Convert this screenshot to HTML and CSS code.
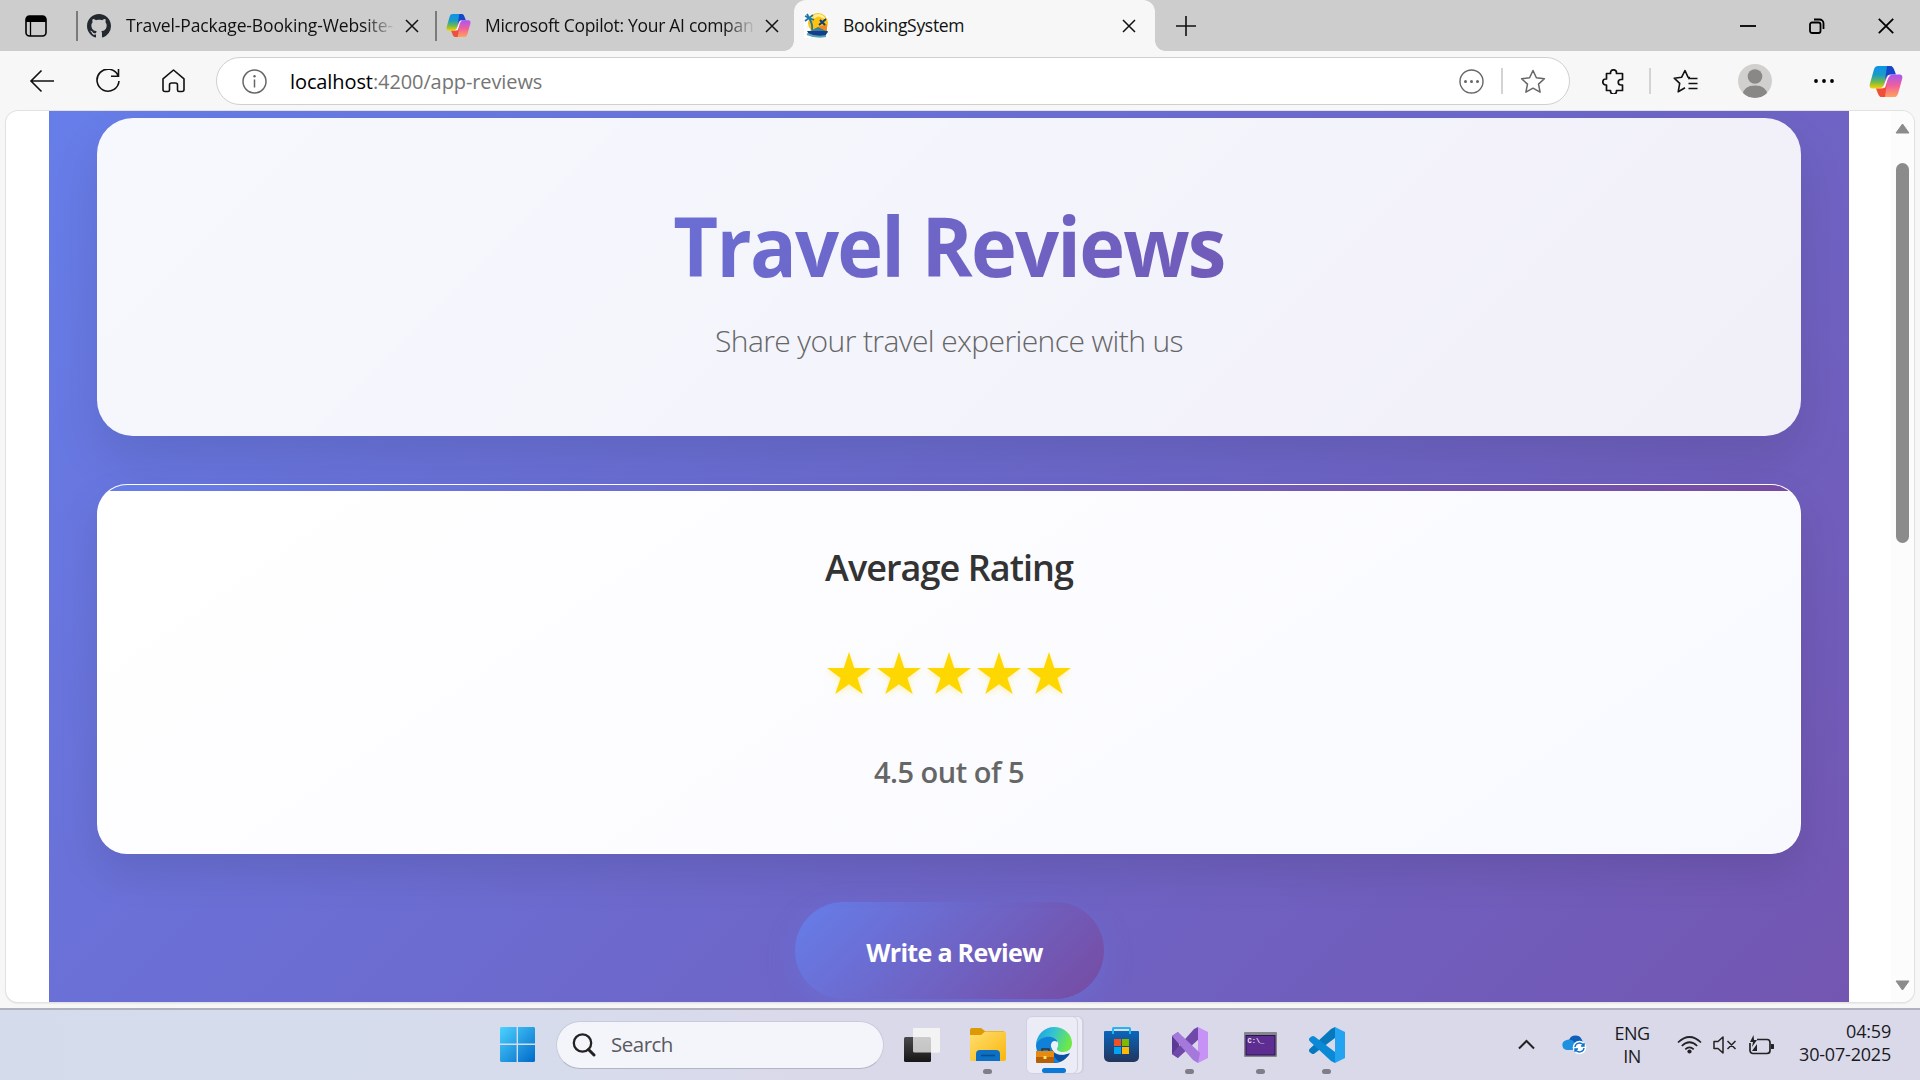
FILE: index.html
```html
<!DOCTYPE html>
<html lang="en">
<head>
<meta charset="utf-8">
<title>BookingSystem</title>
<link rel="stylesheet" href="styles.css">
</head>
<body>
<svg class="defs" width="0" height="0" aria-hidden="true">
  <defs>
    <linearGradient id="cp1" x1="0" y1="0" x2="0" y2="1"><stop offset="0" stop-color="#0a94e8"/><stop offset=".4" stop-color="#1c9bc8"/><stop offset=".7" stop-color="#6dbb4a"/><stop offset="1" stop-color="#ffd000"/></linearGradient>
    <linearGradient id="cp2" x1="0" y1="0" x2="0" y2="1"><stop offset="0" stop-color="#a855f7"/><stop offset=".5" stop-color="#f0609a"/><stop offset="1" stop-color="#ffa25c"/></linearGradient>
    <linearGradient id="win" x1="0" y1="0" x2="1" y2="1"><stop offset="0" stop-color="#4cd2ff"/><stop offset="1" stop-color="#0069c8"/></linearGradient>
    <linearGradient id="fold" x1="0" y1="0" x2="1" y2="1"><stop offset="0" stop-color="#ffdf70"/><stop offset="1" stop-color="#f9b60c"/></linearGradient>
    <linearGradient id="edge" x1="0" y1="0" x2="1" y2=".3"><stop offset="0" stop-color="#1a9ae0"/><stop offset=".5" stop-color="#33c3d4"/><stop offset="1" stop-color="#6be84a"/></linearGradient>
    <linearGradient id="store" x1="0" y1="0" x2="0" y2="1"><stop offset="0" stop-color="#0a66bd"/><stop offset="1" stop-color="#22355c"/></linearGradient>
    <linearGradient id="tv" x1="0" y1="0" x2="0" y2="1"><stop offset="0" stop-color="#4a4a4a"/><stop offset="1" stop-color="#161616"/></linearGradient>
    <symbol id="copilot" viewBox="0 0 34 37" preserveAspectRatio="none">
      <path fill="url(#cp1)" d="M9 0h14l-6 23c-1 3-3 4-6 4H4c-3 0-4-2-3-6L5 4c1-3 2-4 4-4z"/>
      <path fill="#1747c8" d="M18 0h3c2 0 3 1 4 4l2 6h-5c-3 0-4 1-5 4l-1 3z"/>
      <path fill="url(#cp2)" d="M25 37H11l6-23c1-3 3-4 6-4h7c3 0 4 2 3 6l-4 17c-1 3-2 4-4 4z"/>
      <path fill="#f0503a" d="M16 37h-3c-2 0-3-1-4-4l-2-6h5c3 0 4-1 5-4l1-3z"/>
      <path fill="#fff" d="M19 11h3c-2 1-3 3-4 7l-2 8h-4c2-1 3-3 4-7z"/>
    </symbol>
    <symbol id="close" viewBox="0 0 14 14"><path d="M1 1l12 12M13 1L1 13" stroke="#111" stroke-width="1.5" fill="none"/></symbol>
    <symbol id="rate-star" viewBox="0 0 44 42"><path fill="#ffd700" d="M22 0l5.200 16H44L30.400 25.900 35.700 42 22 32.200 8.300 42 13.600 25.900 0 16h16.800z"/></symbol>
  </defs>
</svg>

<div class="tabs">
  <svg class="tab-actions" width="22" height="22" viewBox="0 0 22 22"><rect x="1" y="1" width="20" height="20" rx="3.500" fill="none" stroke="#000" stroke-width="1.600"/><path d="M1 7V4.500A3.500 3.500 0 0 1 4.500 1h13A3.500 3.500 0 0 1 21 4.500V7z"/><path d="M5.500 6v15" stroke="#000" stroke-width="1.300"/></svg>
  <div class="tab">
    <svg class="fav" width="24" height="24" viewBox="0 0 16 16"><path fill="#24292f" d="M8 0C3.580 0 0 3.580 0 8c0 3.540 2.290 6.530 5.470 7.590.4.070.55-.17.55-.38 0-.19-.01-.82-.01-1.490-2.010.37-2.530-.49-2.690-.94-.09-.23-.48-.94-.82-1.130-.28-.15-.68-.52-.01-.53.63-.01 1.080.58 1.230.82.72 1.210 1.870.87 2.330.66.070-.52.28-.87.51-1.070-1.780-.2-3.640-.89-3.640-3.950 0-.87.31-1.590.82-2.150-.08-.2-.36-1.020.08-2.120 0 0 .67-.21 2.200.82.64-.18 1.320-.27 2-.27s1.360.09 2 .27c1.530-1.040 2.200-.82 2.200-.82.44 1.100.16 1.920.08 2.120.51.56.82 1.270.82 2.150 0 3.070-1.870 3.750-3.650 3.950.29.25.54.73.54 1.480 0 1.070-.01 1.930-.01 2.200 0 .21.15.46.55.38A8.010 8.010 0 0 0 16 8c0-4.420-3.580-8-8-8z"/></svg>
    <span class="tab-title fade t1">Travel-Package-Booking-Website-</span>
    <svg class="x" width="14" height="14"><use href="#close"/></svg>
  </div>
  <div class="tab">
    <svg class="fav" width="25" height="23"><use href="#copilot"/></svg>
    <span class="tab-title fade t2">Microsoft Copilot: Your AI compan</span>
    <svg class="x" width="14" height="14"><use href="#close"/></svg>
  </div>
  <div class="tab active">
    <svg class="fav" width="24" height="25" viewBox="0 0 24 25"><path fill="#fff" d="M0 3h24v22H0z"/><circle cx="14" cy="10" r="10" fill="#ffc20e"/><path d="M7 6c3-5 10-6 14 0M10 5c3-3 6-3 9 0" fill="none" stroke="#fff0a0" stroke-width="1.500"/><path d="M14 14l9-3v8H9z" fill="#f08a1d"/><path d="M5 5L1 3M5 5L3 1M5 5l4-3M5 5l5 2M5 5L1 8M5 5q4 6 3 12" stroke="#1f76a8" stroke-width="1.800" fill="none"/><path d="M15 12l7-6M16 7l5 5" stroke="#123f7c" stroke-width="2"/><path d="M4 19l10-5 10 5-3 4H6z" fill="#3e7f97"/><path d="M3 18h21l-3 5H6z" fill="#123f8c"/><path d="M3 21q9 4 19 2" stroke="#58a2b8" stroke-width="2" fill="none"/></svg>
    <span class="tab-title t3">BookingSystem</span>
    <svg class="x" width="14" height="14"><use href="#close"/></svg>
  </div>
  <svg class="plus" width="22" height="22" viewBox="0 0 22 22"><path d="M11 1v20M1 11h20" stroke="#111" stroke-width="1.600"/></svg>
  <div class="win-controls">
    <svg width="16" height="16" viewBox="0 0 16 16"><path d="M0 8h16" stroke="#000" stroke-width="1.800"/></svg>
    <svg width="16" height="16" viewBox="0 0 16 16"><rect x="1" y="4.500" width="10.500" height="10.500" rx="2" fill="none" stroke="#000" stroke-width="1.800"/><path d="M5 1.500h5.500a4 4 0 0 1 4 4V11" fill="none" stroke="#000" stroke-width="1.800"/></svg>
    <svg width="16" height="16" viewBox="0 0 16 16"><path d="M.8.8l14.400 14.400M15.200.8L.8 15.200" stroke="#000" stroke-width="1.800"/></svg>
  </div>
</div>

<div class="toolbar">
  <svg class="back" width="26" height="24" viewBox="0 0 26 24"><path d="M25 12H2M12.500 1.500L2 12l10.500 10.500" fill="none" stroke="#111" stroke-width="1.600"/></svg>
  <svg class="reload" width="24" height="24" viewBox="0 0 24 24"><path d="M22 6.500A11 11 0 1 0 23 12M22.500 0v7.200h-7.500" fill="none" stroke="#111" stroke-width="1.600"/></svg>
  <svg class="home" width="23" height="24" viewBox="0 0 23 24"><path d="M1 9.800L11.500 1 22 9.800V20.500a2 2 0 0 1-2 2h-3a1.500 1.500 0 0 1-1.500-1.500v-5a2 2 0 0 0-2-2h-4a2 2 0 0 0-2 2v5A1.500 1.500 0 0 1 6 22.500H3a2 2 0 0 1-2-2z" fill="none" stroke="#111" stroke-width="1.600" stroke-linejoin="round"/></svg>
  <div class="address">
    <svg class="info" width="25" height="25" viewBox="0 0 25 25"><circle cx="12.500" cy="12.500" r="11.500" fill="none" stroke="#666" stroke-width="1.500"/><path d="M12.500 10.500v8" stroke="#666" stroke-width="1.500"/><circle cx="12.500" cy="7.200" r="1.200" fill="#666"/></svg>
    <span class="url">localhost<span class="path">:4200/app-reviews</span></span>
    <svg class="more" width="25" height="25" viewBox="0 0 25 25"><circle cx="12.500" cy="12.500" r="11.500" fill="none" stroke="#666" stroke-width="1.400"/><g fill="#666"><circle cx="6.500" cy="12.500" r="1.500"/><circle cx="12.500" cy="12.500" r="1.500"/><circle cx="18.500" cy="12.500" r="1.500"/></g></svg>
    <i class="vline"></i>
    <svg class="star" width="26" height="25" viewBox="0 0 26 25"><path d="M13 1.500l3.400 7.200 8 1-5.900 5.400 1.600 8L13 19.200 5.900 23.100l1.600-8L1.600 9.700l8-1z" fill="none" stroke="#666" stroke-width="1.500" stroke-linejoin="round"/></svg>
  </div>
  <svg class="puzzle" width="23" height="25" viewBox="0 0 23 25"><path d="M4.500 4.500H8.500V3.800a3 3 0 1 1 6 0v.7H20.500V10.500H19a2.500 2.500 0 0 0 0 5.500h1.500V21.500H14.500v.7a3 3 0 0 1-6 0v-.7H4.500V16h-.7a3 3 0 0 1 0-6h.7z" fill="none" stroke="#111" stroke-width="1.700" stroke-linejoin="round"/></svg>
  <i class="vline v2"></i>
  <svg class="favs" width="25" height="25" viewBox="0 0 25 25"><path d="M17 8.500l-2-.3L12 1.500 8.700 8.200l-7.500 1 5.500 5.200-1.500 8.400 6.800-4M15 9.500h9.500M15.500 14.500h9M15.500 19.500h9" fill="none" stroke="#111" stroke-width="1.600" stroke-linejoin="round"/></svg>
  <svg class="avatar" width="34" height="34" viewBox="0 0 34 34"><clipPath id="av"><circle cx="17" cy="17" r="17"/></clipPath><circle cx="17" cy="17" r="17" fill="#d2d0ce"/><g fill="#8a8886" clip-path="url(#av)"><circle cx="17" cy="12.500" r="7.300"/><path d="M4.500 31q1-9.500 12.500-9.500T29.500 31q-6 3-12.500 3T4.500 31z"/></g></svg>
  <svg class="dots" width="22" height="6" viewBox="0 0 22 6"><circle cx="3" cy="3" r="1.900"/><circle cx="11" cy="3" r="1.900"/><circle cx="19" cy="3" r="1.900"/></svg>
  <svg class="cop" width="34" height="31"><use href="#copilot"/></svg>
</div>

<div class="viewport">
  <main class="reviews">
    <section class="hero">
      <h1>Travel Reviews</h1>
      <p>Share your travel experience with us</p>
    </section>
    <section class="rating">
      <h2>Average Rating</h2>
      <div class="stars">
        <svg width="44" height="42"><use href="#rate-star"/></svg>
        <svg width="44" height="42"><use href="#rate-star"/></svg>
        <svg width="44" height="42"><use href="#rate-star"/></svg>
        <svg width="44" height="42"><use href="#rate-star"/></svg>
        <svg width="44" height="42"><use href="#rate-star"/></svg>
      </div>
      <div class="score">4.5 out of 5</div>
    </section>
    <button class="write">Write a Review</button>
  </main>
  <div class="scrollbar">
    <svg width="15" height="11" viewBox="0 0 15 11"><path d="M7.500 1L14 10H1z" fill="#8b8b8b" stroke="#8b8b8b" stroke-linejoin="round"/></svg>
    <i class="thumb"></i>
    <svg width="15" height="11" viewBox="0 0 15 11"><path d="M7.500 10L14 1H1z" fill="#8b8b8b" stroke="#8b8b8b" stroke-linejoin="round"/></svg>
  </div>
</div>

<footer class="taskbar">
  <svg class="start" width="35" height="35" viewBox="0 0 35 35"><path fill="url(#win)" d="M1 0h15.600v16.600H0V1zM18 0h16l1 1v15.600H18zM0 18h16.600v17H1l-1-1zM18 18h17v16l-1 1H18z"/></svg>
  <div class="search">
    <svg width="24" height="24" viewBox="0 0 24 24"><circle cx="10.500" cy="10" r="8.700" fill="none" stroke="#222" stroke-width="2.300"/><path d="M16.500 16.500l5.500 5.500" stroke="#222" stroke-width="3" stroke-linecap="round"/></svg>
    <span>Search</span>
  </div>
  <div class="app a-tv"><svg width="36" height="34" viewBox="0 0 36 34"><rect x="0" y="9" width="27" height="25" rx="1.500" fill="url(#tv)"/><rect x="9" y="0" width="27" height="24.500" rx="1.500" fill="#fafafa" fill-opacity=".74"/><path d="M27 0h8a1 1 0 0 1 1 1v22.500a1 1 0 0 1-1 1h-8zM9 0h18v9H9z" fill="#f4f4f4" fill-opacity=".7"/></svg></div>
  <div class="app a-fold"><svg width="36" height="34" viewBox="0 0 36 34"><path fill="#dd9a05" d="M0 2a2 2 0 0 1 2-2h9l4 3h19v8H0z"/><path fill="url(#fold)" d="M0 7h11l4-3.500h19a2 2 0 0 1 2 2V31a2 2 0 0 1-2 2H2a2 2 0 0 1-2-2z"/><path fill="#0c70c4" d="M6 33v-7a4 4 0 0 1 4-4h16a4 4 0 0 1 4 4v7z"/><path d="M11 27.500h14" stroke="#0a4d8c" stroke-width="1.600"/></svg><i></i></div>
  <div class="app a-edge"><svg width="36" height="36" viewBox="0 0 36 36"><path fill="#0a4fa0" d="M16 20c0 7 8 10 18 6-3 6-9 10-16 10C9 36 3 31 1 23z"/><path fill="#1180d8" d="M0 18C1 11 7 8 13 9c6 0 9 4 8 6-3-2-6 1-5 6 0 7 4 12 8 14-8 3-24-3-24-17z"/><path fill="url(#edge)" d="M0 17C1 7 9 0 18 0c10 0 18 7 18 16 0 6-4 9-9 9-4 0-7-1-7-3 0-1 3-2 2-6C20 8 6 7 0 17z"/><path fill="#eaf0fa" d="M18 14c4 0 5 4 3 7-1 3 5 6 13 5-7 3-15 1-18-4-2-4-1-7 2-8z"/><rect x="0" y="24" width="18" height="12" rx="1" fill="#b55f08"/><path d="M0 24h18v6H0z" fill="#e68a10"/><path d="M6 24v-2h7v2" stroke="#333" fill="none" stroke-width="1.500"/><rect x="7.500" y="29" width="3" height="3" fill="#ffe060"/></svg><i class="on"></i></div>
  <div class="app a-store"><svg width="35" height="35" viewBox="0 0 35 35"><path d="M9 7V1.500a.5.500 0 0 1 .5-.5h16a.5.500 0 0 1 .5.500V7" fill="none" stroke="#24b5f0" stroke-width="2"/><path fill="url(#store)" d="M0 5a1 1 0 0 1 1-1h33a1 1 0 0 1 1 1v25a5 5 0 0 1-5 5H5a5 5 0 0 1-5-5z"/><path d="M9 4v3M26 4v3" stroke="#24b5f0" stroke-width="2"/><path fill="#f25022" d="M10 12h7v7h-7z"/><path fill="#7fba00" d="M18 12h7v7h-7z"/><path fill="#00a4ef" d="M10 20h7v7h-7z"/><path fill="#ffb900" d="M18 20h7v7h-7z"/></svg></div>
  <div class="app a-vs"><svg width="36" height="36" viewBox="0 0 36 36"><path fill="#5c3a94" d="M0 9l6-4 1 6v14l-1 6-6-4z"/><path fill="#7048aa" d="M6 31L0 27 22 2l4-2 2 11z"/><path fill="#c792f5" d="M26 0l10 5v26l-10 5z"/><path fill="#a578dc" d="M0 9l6-4 22 21-2 10-5-3z"/></svg><i></i></div>
  <div class="app a-cmd"><svg width="33" height="25" viewBox="0 0 33 25"><rect width="33" height="25" rx="1" fill="#85858c"/><rect x="1.500" y="3" width="30" height="20.500" fill="#2a1450"/><rect x="2.500" y="4" width="28" height="18.500" fill="#5d2d91"/><text x="3.500" y="10.500" font-family="Liberation Mono, monospace" font-weight="bold" font-size="7" fill="#eee">C:\_</text></svg><i></i></div>
  <div class="app a-code"><svg width="36" height="36" viewBox="0 0 36 36"><path fill="#0878bd" d="M26 0v11L5.500 26.500q-1.500 1-3 0L.5 25q-1-1.500 0-3L22 2z"/><path fill="#0a8ad6" d="M26 36V25L5.500 9.500q-1.500-1-3 0L.5 11q-1 1.500 0 3L22 34z"/><path fill="#24a4f0" d="M26 0l10 5v26l-10 5z"/></svg><i></i></div>
  <div class="tray">
    <svg class="chev" width="17" height="11" viewBox="0 0 17 11"><path d="M1 9.500L8.500 2 16 9.500" fill="none" stroke="#222" stroke-width="2"/></svg>
    <svg class="cloud" width="25" height="21" viewBox="0 0 25 21"><path fill="#0f5fb8" d="M7 6a7 7 0 0 1 13 0l2 4H7z"/><path fill="#1e90e0" d="M5 16a5 5 0 0 1-1-9.800Q9 4 13 9l7 2v5z"/><circle cx="17.500" cy="13.500" r="6.800" fill="#fff"/><path d="M13 13a4.500 4.500 0 0 1 8.500-1.500M22 14a4.500 4.500 0 0 1-8.500 1.500M22 9v3h-3M13 18v-3h3" fill="none" stroke="#0b70c8" stroke-width="1.400"/></svg>
    <div class="lang"><span>ENG</span><span>IN</span></div>
    <svg class="wifi" width="25" height="18" viewBox="0 0 25 18"><path d="M1 6.500q11.500-11 23 0M4.800 10q7.700-7.500 15.400 0M8.300 13.300q4.200-4 8.400 0" fill="none" stroke="#222" stroke-width="1.700"/><circle cx="12.500" cy="15.500" r="2.100" fill="#222"/></svg>
    <svg class="vol" width="24" height="18" viewBox="0 0 24 18"><path d="M1 5.500h4L10 1v16l-5-4.500H1zM14.500 5l8 8M22.500 5l-8 8" fill="none" stroke="#222" stroke-width="1.500" stroke-linejoin="round"/></svg>
    <svg class="bat" width="25" height="20" viewBox="0 0 25 20"><path d="M8 4.500h10a3 3 0 0 1 3 3v8a3 3 0 0 1-3 3H4a3 3 0 0 1-3-3V8" fill="none" stroke="#222" stroke-width="1.700"/><path d="M4.500 0L1 7h3l-1 5 5-7H5zM22 9h1.500a1.500 1.500 0 0 1 0 5H22zM3 16h5V9z" fill="#222"/></svg>
    <div class="clock"><span>04:59</span><span>30-07-2025</span></div>
  </div>
</footer>
</body>
</html>
```
FILE: styles.css
```css
* { box-sizing: border-box; }
body { margin: 0; width: 1920px; height: 1080px; overflow: hidden; display: flex; flex-direction: column; background: #f7f7f7; font-family: "Open Sans", "Noto Sans", sans-serif; color: #111; }
svg { display: block; flex: none; }
.defs { position: absolute; }
h1, h2, p { margin: 0; }

.tabs { height: 51px; flex: none; display: flex; align-items: center; background: #cdcdcd; }
.tab-actions { margin: 0 29px 0 25px; }
.tab { position: relative; width: 359px; height: 51px; display: flex; align-items: center; padding-left: 10px; font-size: 17.500px; }
.tab:not(.active)::before { content: ""; width: 2px; height: 30px; background: #7b7b7b; margin-left: -10px; margin-right: 9px; }
.tab-title { width: 270px; margin-left: 15px; margin-top: -1px; white-space: nowrap; }
.tab .x { margin-left: 9px; }
.fade { -webkit-mask-image: linear-gradient(90deg, #000 88%, transparent 100%); mask-image: linear-gradient(90deg, #000 88%, transparent 100%); }
.t1 { letter-spacing: -.12px; }
.t2 { letter-spacing: -.3px; margin-left: 14px; width: 271px; }
.tab.active { background: #f7f7f7; border-radius: 12px 12px 0 0; width: 361px; }
.tab.active::before, .tab.active::after { content: ""; position: absolute; bottom: 0; width: 10px; height: 10px; }
.tab.active::before { left: -10px; background: radial-gradient(circle at 0 0, transparent 9.500px, #f7f7f7 10px); }
.tab.active::after { right: -10px; background: radial-gradient(circle at 100% 0, transparent 9.500px, #f7f7f7 10px); }
.t3 { letter-spacing: -.3px; }
.plus { margin-left: 20px; }
.win-controls { margin-left: auto; margin-right: 26px; display: flex; gap: 53px; }

.toolbar { height: 60px; flex: none; display: flex; align-items: center; padding-left: 29px; }
.reload { margin-left: 41px; }
.home { margin-left: 42px; }
.address { margin-left: 31px; width: 1354px; height: 48px; border: 1.500px solid #d0d0d0; border-radius: 24px; background: #fff; display: flex; align-items: center; padding-left: 25px; }
.url { margin-left: 23px; font-size: 20px; letter-spacing: -.1px; color: #000; flex: 1; white-space: nowrap; }
.path { color: #757575; }
.vline { width: 2px; height: 26px; background: #d3d3d3; margin: 0 17px; }
.star { margin-right: 23px; }
.puzzle { margin-left: 32px; }
.v2 { margin: 0 22px 0 24px; }
.avatar { margin-left: 40px; }
.dots { margin-left: 41px; }
.cop { margin-left: 34px; }

.viewport { margin: 0 6px; width: 1908px; height: 891px; flex: none; background: #fff; border-radius: 12px; box-shadow: 0 0 0 1px #e2e2e2, 0 1px 2px #ccc; overflow: hidden; display: flex; }
.reviews { margin-left: 43px; width: 1800px; height: 891px; padding: 7px 48px 0; overflow: hidden; background: linear-gradient(135deg, #667eea 0%, #764ba2 100%) 0 -60px / 1800px 1700px no-repeat; display: flex; flex-direction: column; align-items: center; text-align: center; }
.hero { width: 1704px; height: 318px; flex: none; padding: 77px 48px 0; border-radius: 36px; background: linear-gradient(135deg, rgba(255,255,255,.95), rgba(255,255,255,.9)); box-shadow: 0 24px 48px rgba(0,0,0,.1); }
h1 { font-size: 82.500px; line-height: 100px; font-weight: 700; letter-spacing: -1.900px; transform: scaleX(.94); background: linear-gradient(135deg, #667eea, #764ba2); -webkit-background-clip: text; background-clip: text; color: transparent; }
.hero p { margin-top: 26px; font-size: 30px; line-height: 40px; font-weight: 300; letter-spacing: -.6px; color: #666; }
.rating { position: relative; overflow: hidden; margin-top: 48px; width: 1704px; height: 370px; flex: none; padding-top: 58px; border: 1px solid rgba(255,255,255,.8); border-radius: 30px; background: linear-gradient(145deg, #fff, #f8f9ff); box-shadow: 0 18px 42px rgba(0,0,0,.1); display: flex; flex-direction: column; align-items: center; }
.rating::before { content: ""; position: absolute; left: 0; right: 0; top: 0; height: 6px; background: linear-gradient(90deg, #667eea, #764ba2); }
h2 { font-size: 36px; line-height: 50px; font-weight: 600; letter-spacing: -.95px; color: #333; }
.stars { margin-top: 59px; margin-right: 1px; display: flex; gap: 6px; filter: drop-shadow(0 2px 3px rgba(255,215,0,.3)); }
.score { margin-top: 58px; font-size: 29px; line-height: 40px; font-weight: 600; letter-spacing: -.5px; color: #666; }
.write { margin-top: 48px; width: 309px; height: 97px; flex: none; border: 0; padding: 2px 0 0 11px; border-radius: 49px; font: 700 25px/34px "Open Sans", sans-serif; letter-spacing: -.7px; color: #fff; background: linear-gradient(135deg, #667eea, #764ba2); box-shadow: 0 10px 30px rgba(102,126,234,.3); }
.scrollbar { margin-left: auto; width: 23px; background: #fcfcfc; display: flex; flex-direction: column; align-items: center; padding: 12px 0 11px; }
.thumb { width: 13px; height: 380px; border-radius: 7px; background: #8b8b8b; margin: 29px 0 auto; }

.taskbar { margin-top: 6px; height: 72px; flex: none; border-top: 2px solid #b0b0be; background: linear-gradient(90deg, #d4dcec 0, #d6dcec 27%, #dad9ea 42%, #dad9ea 100%); display: flex; align-items: center; padding: 0 0 1px 500px; }
.search { margin-left: 21px; width: 328px; height: 48px; border-radius: 24px; border: 1.500px solid #c9cbdd; border-bottom-color: #b3b5c4; background: #f4f5fb; display: flex; align-items: center; padding-left: 15px; font-size: 20.500px; letter-spacing: -.5px; color: #5a5a60; }
.search > span { margin-left: 15px; margin-top: -1px; }
.app { position: relative; height: 56px; display: flex; align-items: center; justify-content: center; }
.app i { position: absolute; bottom: -1px; left: calc(50% - 5px); width: 9px; height: 5px; border-radius: 3px; background: #7e7d88; }
.app i.on { left: 15px; bottom: 0; width: 24px; background: #0a78d4; }
.a-tv { margin-left: 20px; }
.a-fold { margin-left: 30px; }
.a-edge { margin-left: 20px; width: 52px; height: 58px; border-radius: 6px; background: #ececf6; border: 1px solid #d0d0e0; box-shadow: 5px 0 0 -1px #ececf6, 6px 0 0 0 #cfcfdf; padding-left: 3px; }
.a-store { margin-left: 26px; }
.a-vs { margin-left: 33px; }
.a-cmd { margin-left: 36px; }
.a-code { margin-left: 32px; }
.tray { margin-left: auto; margin-right: 29px; display: flex; align-items: center; font-size: 18px; line-height: 23px; color: #1a1a1e; }
.chev { margin-left: -10px; }
.cloud { margin-left: 27px; }
.lang { width: 44px; margin-left: 23px; display: flex; flex-direction: column; align-items: center; letter-spacing: -.5px; }
.wifi { margin-left: 23px; }
.vol { margin-left: 11px; }
.bat { margin-left: 12px; }
.clock { width: 117px; display: flex; flex-direction: column; align-items: flex-end; letter-spacing: -.2px; margin-top: -3px; }
```
